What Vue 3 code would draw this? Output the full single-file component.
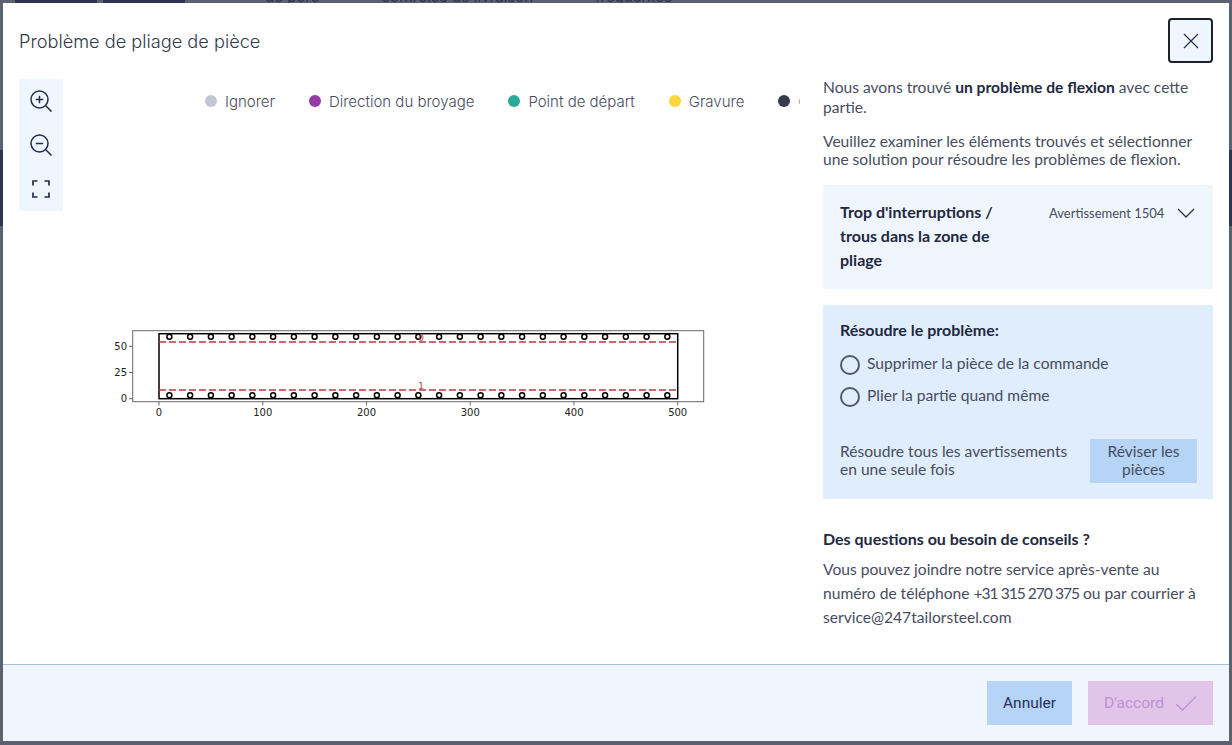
<script setup>
const legend = [
  { label: 'Ignorer', color: '#c4c6d2' },
  { label: 'Direction du broyage', color: '#953aa6' },
  { label: 'Point de départ', color: '#2aa89a' },
  { label: 'Gravure', color: '#fbd63c' },
  { label: 'Contour', color: '#363a4c' }
]

const toX = (v) => 159 + v * 1.0374
const holes = []
for (let v = 10; v <= 490; v += 20) holes.push(toX(v))
const xTicks = [0, 100, 200, 300, 400, 500]
const yTicks = [
  { label: '50', y: 346.3 },
  { label: '25', y: 372.5 },
  { label: '0', y: 398.7 }
]
</script>

<template>
  <div class="page">
    <div class="backdrop-top">
      <span class="dark-block"></span>
      <span class="dark-block small"></span>
      <span class="bg-text first">de pore</span>
      <span class="bg-text">contrôles de livraison</span>
      <span class="bg-text">fréquentes</span>
    </div>

    <div class="modal">
      <header class="modal__head">
        <h2>Problème de pliage de pièce</h2>
        <button class="close" aria-label="Fermer">
          <svg width="18" height="18" viewBox="0 0 18 18">
            <path d="M2 2 L16 16 M16 2 L2 16" stroke="#2a3352" stroke-width="1.3" fill="none" />
          </svg>
        </button>
      </header>

      <div class="modal__body">
        <section class="viewer">
          <div class="tools">
            <svg width="24" height="24" viewBox="0 0 24 24" fill="none" stroke="#232b4a" stroke-width="1.5">
              <circle cx="10.5" cy="10.5" r="8.5" />
              <path d="M16.8 16.8 L22.5 22.5 M10.5 6.8 V14.2 M6.8 10.5 H14.2" />
            </svg>
            <svg width="24" height="24" viewBox="0 0 24 24" fill="none" stroke="#232b4a" stroke-width="1.5">
              <circle cx="10.5" cy="10.5" r="8.5" />
              <path d="M16.8 16.8 L22.5 22.5 M6.8 10.5 H14.2" />
            </svg>
            <svg width="24" height="24" viewBox="0 0 24 24" fill="none" stroke="#232b4a" stroke-width="1.7">
              <path d="M4 8.5 V4 H8.5 M15.5 4 H20 V8.5 M20 15.5 V20 H15.5 M8.5 20 H4 V15.5" />
            </svg>
          </div>

          <div class="stage">
            <div class="legend">
              <div v-for="item in legend" :key="item.label" class="legend__item">
                <span class="dot" :style="{ backgroundColor: item.color }"></span>
                {{ item.label }}
              </div>
            </div>

            <svg class="plot" width="620" height="100" viewBox="100 320 620 100">
              <rect x="132.7" y="330.7" width="571" height="71" fill="#fff" stroke="#666" stroke-width="1" />
              <g stroke="#444" stroke-width="0.8">
                <line v-for="t in xTicks" :key="t" :x1="toX(t)" :x2="toX(t)" y1="402" y2="405.5" />
                <line v-for="t in yTicks" :key="t.label" x1="129" x2="132.7" :y1="t.y" :y2="t.y" />
              </g>
              <g class="tick">
                <text v-for="t in xTicks" :key="t" :x="toX(t)" y="416" text-anchor="middle">{{ t }}</text>
                <text v-for="t in yTicks" :key="t.label" x="127" :y="t.y + 3.5" text-anchor="end">{{ t.label }}</text>
              </g>
              <rect x="159" y="333.7" width="518.7" height="65" fill="none" stroke="#000" stroke-width="1.5" />
              <g stroke="#b93a3c" stroke-width="1.3" stroke-dasharray="7 3">
                <line x1="159" x2="677.7" y1="342" y2="342" />
                <line x1="159" x2="677.7" y1="390" y2="390" />
              </g>
              <g fill="none" stroke="#000" stroke-width="1.5">
                <circle v-for="x in holes" :key="x" :cx="x" cy="336.8" r="2.5" />
                <circle v-for="x in holes" :key="'b' + x" :cx="x" cy="395.3" r="2.5" />
              </g>
              <g class="bend">
                <text x="421" y="341">0</text>
                <text x="421" y="389">1</text>
              </g>
            </svg>
          </div>
        </section>

        <aside class="side">
          <p class="side__first">Nous avons trouvé <strong>un problème de flexion</strong> avec cette partie.</p>
          <p class="side__second">Veuillez examiner les éléments trouvés et sélectionner une solution pour résoudre les problèmes de flexion.</p>

          <div class="warning">
            <div class="warning__title">Trop d'interruptions / trous dans la zone de pliage</div>
            <div class="warning__code">Avertissement 1504</div>
            <svg class="warning__chevron" width="18" height="10" viewBox="0 0 18 10">
              <path d="M1 1 L9 9 L17 1" fill="none" stroke="#2a3352" stroke-width="1.3" />
            </svg>
          </div>

          <div class="solve">
            <div class="solve__title">Résoudre le problème:</div>
            <label class="radio"><span class="radio__mark"></span>Supprimer la pièce de la commande</label>
            <label class="radio"><span class="radio__mark"></span>Plier la partie quand même</label>
            <div class="solve__all">
              <span>Résoudre tous les avertissements en une seule fois</span>
              <button class="review">Réviser les pièces</button>
            </div>
          </div>

          <h4>Des questions ou besoin de conseils ?</h4>
          <p class="help">Vous pouvez joindre notre service après-vente au numéro de téléphone <span class="phone">+31 315 270 375</span> ou par courrier à service@247tailorsteel.com</p>
        </aside>
      </div>

      <footer class="modal__foot">
        <button class="btn btn--cancel">Annuler</button>
        <button class="btn btn--ok">
          D'accord
          <svg width="22" height="16" viewBox="0 0 22 16">
            <path d="M1 9 L7.5 15 L21 1.5" fill="none" stroke="#bb93d3" stroke-width="1.4" />
          </svg>
        </button>
      </footer>
    </div>
  </div>
</template>

<style>
html, body {
  margin: 0;
  background: #5c6170;
}
</style>

<style scoped>
.page {
  position: relative;
  width: 1232px;
  height: 745px;
  overflow: hidden;
  background: linear-gradient(to bottom, #5c6170 150px, #2e3350 150px, #2e3350 226px, #5c6170 226px);
  font-family: Lato, "Liberation Sans", sans-serif;
  color: #474c5e;
}

.backdrop-top {
  display: flex;
  height: 3px;
  overflow: hidden;
  background: #5c6170;
  font-family: Inter, sans-serif;
  font-size: 15px;
  line-height: 0;
  color: #2f3347;
}
.dark-block {
  width: 82px;
  height: 3px;
  margin-left: 15px;
  background: #2e3350;
}
.dark-block.small {
  width: 82px;
  margin-left: 6px;
}
.bg-text {
  margin-top: -3px;
  margin-right: 62px;
  white-space: nowrap;
}
.bg-text.first {
  margin-left: 80px;
}

/* modal sits over the page */
.modal {
  position: absolute;
  left: 3px;
  top: 3px;
  width: 1226px;
  height: 738px;
  display: flex;
  flex-direction: column;
  background: #fff;
}

.modal__head {
  height: 76px;
  flex: none;
  box-sizing: border-box;
  padding: 15px 16px 0 16px;
  display: flex;
  justify-content: space-between;
}
.modal__head h2 {
  margin: 9px 0 0;
  font-family: Inter, sans-serif;
  font-weight: 300;
  font-size: 18.2px;
  line-height: 28px;
  color: #33384b;
}
.close {
  width: 45px;
  height: 45px;
  padding: 0;
  display: flex;
  align-items: center;
  justify-content: center;
  background: #f0f6fe;
  border: 2px solid #1b2033;
  border-radius: 4px;
}

.modal__body {
  flex: 1;
  min-height: 0;
  display: flex;
  overflow: hidden;
}

.viewer {
  width: 797px;
  flex: none;
  box-sizing: border-box;
  padding-left: 16px;
  display: flex;
  overflow: hidden;
}
.tools {
  width: 44px;
  height: 132px;
  flex: none;
  box-sizing: border-box;
  padding: 10px 0;
  display: flex;
  flex-direction: column;
  align-items: center;
  gap: 20px;
  background: #f0f6fe;
}
.stage {
  flex: 1;
  min-width: 0;
  overflow: hidden;
}
.legend {
  display: flex;
  gap: 34px;
  height: 44px;
  padding-left: 142px;
  align-items: center;
  white-space: nowrap;
  font-family: Inter, sans-serif;
  font-weight: 300;
  font-size: 15px;
}
.legend__item {
  display: flex;
  align-items: center;
  gap: 8px;
}
.dot {
  width: 12px;
  height: 12px;
  border-radius: 50%;
}
.plot {
  display: block;
  margin: 197px 0 0 37px;
}
.tick {
  font-family: "DejaVu Sans", sans-serif;
  font-size: 10px;
  fill: #222;
}
.bend {
  font-family: "DejaVu Sans", sans-serif;
  font-size: 9px;
  fill: #c1484a;
  text-anchor: middle;
}

.side {
  width: 390px;
  flex: none;
  margin-left: 23px;
  font-size: 15.6px;
  line-height: 18px;
}
.side p {
  margin: 0;
}
.side strong {
  font-weight: 700;
  color: #22283f;
}
.side .side__first {
  margin-top: -2px;
  line-height: 20px;
}
.side .side__second {
  margin-top: 15px;
}

.warning {
  margin-top: 17px;
  height: 104px;
  box-sizing: border-box;
  padding: 15px 17px;
  display: flex;
  align-items: flex-start;
  background: #f0f6fe;
}
.warning__title {
  width: 170px;
  flex: none;
  font-size: 16px;
  font-weight: 700;
  line-height: 24px;
  color: #22283f;
}
.warning__code {
  margin-left: 39px;
  font-size: 13px;
  line-height: 26px;
  white-space: nowrap;
}
.warning__chevron {
  margin: 8px 0 0 13px;
}

.solve {
  margin-top: 16px;
  height: 194px;
  box-sizing: border-box;
  padding: 16px 16px 16px 17px;
  display: flex;
  flex-direction: column;
  background: #e0edfc;
}
.solve__title {
  font-size: 16px;
  font-weight: 700;
  line-height: 18px;
  margin-bottom: 8px;
  color: #22283f;
}
.radio {
  display: flex;
  align-items: center;
  height: 32px;
  gap: 7px;
}
.radio__mark {
  width: 16px;
  height: 16px;
  margin-top: 4px;
  border: 2px solid #535969;
  border-radius: 50%;
}
.solve__all {
  margin-top: auto;
  display: flex;
  align-items: center;
  justify-content: space-between;
}
.solve__all span {
  width: 240px;
  margin-bottom: 2px;
}
.review {
  width: 107px;
  height: 44px;
  padding: 0 0 2px;
  border: none;
  background: #b5d4f6;
  font: inherit;
  color: #474c5e;
}

.side h4 {
  margin: 31px 0 0;
  font-size: 16px;
  line-height: 18px;
  font-weight: 700;
  color: #22283f;
}
.side .help {
  margin-top: 9px;
  line-height: 24px;
}
.phone {
  letter-spacing: -1px;
}

.modal__foot {
  height: 77px;
  flex: none;
  box-sizing: border-box;
  padding: 16px;
  display: flex;
  justify-content: flex-end;
  gap: 16px;
  background: #f1f6fe;
  border-top: 1px solid #a3c4d4;
}
.btn {
  height: 44px;
  padding: 0;
  border: none;
  display: flex;
  align-items: center;
  justify-content: center;
  font-family: Roboto, sans-serif;
  font-size: 15.5px;
}
.btn--cancel {
  width: 85px;
  background: #b5d4f6;
  color: #23305a;
}
.btn--ok {
  width: 125px;
  gap: 11px;
  background: #e2c4e8;
  color: #bb93d3;
}
</style>
